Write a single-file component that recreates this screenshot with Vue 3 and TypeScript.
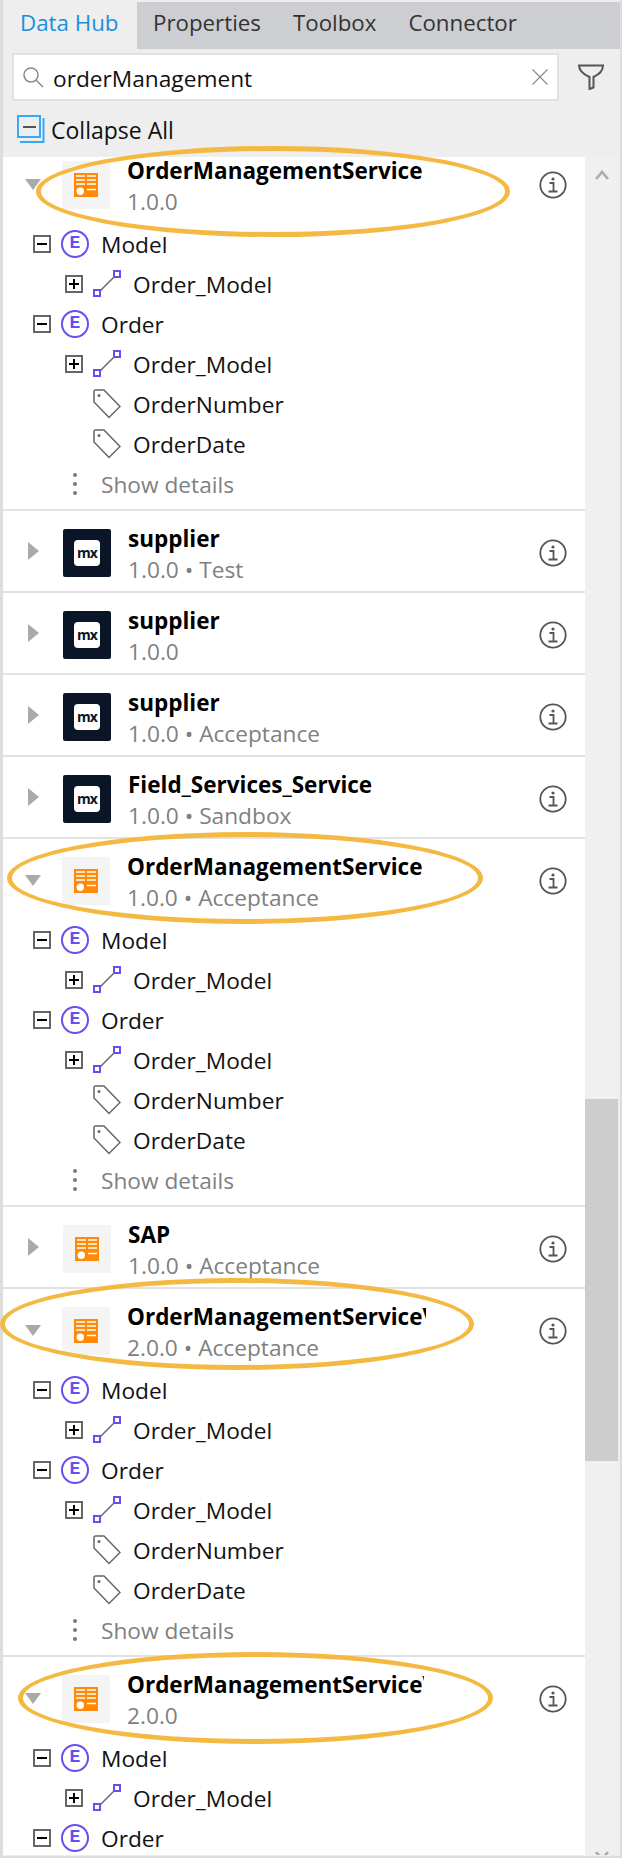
<script setup lang="ts">
interface Section {
  name: string
  sub: string
  icon: 'orange' | 'mx'
  open?: boolean
  nameWidth?: number
}

const tabs = ['Data Hub', 'Properties', 'Toolbox', 'Connector']

const sections: Section[] = [
  { name: 'OrderManagementService', sub: '1.0.0', icon: 'orange', open: true },
  { name: 'supplier', sub: '1.0.0 • Test', icon: 'mx' },
  { name: 'supplier', sub: '1.0.0', icon: 'mx' },
  { name: 'supplier', sub: '1.0.0 • Acceptance', icon: 'mx' },
  { name: 'Field_Services_Service', sub: '1.0.0 • Sandbox', icon: 'mx' },
  { name: 'OrderManagementService', sub: '1.0.0 • Acceptance', icon: 'orange', open: true },
  { name: 'SAP', sub: '1.0.0 • Acceptance', icon: 'orange' },
  { name: 'OrderManagementServiceV2', sub: '2.0.0 • Acceptance', icon: 'orange', open: true, nameWidth: 299 },
  { name: 'OrderManagementServiceV2', sub: '2.0.0', icon: 'orange', open: true, nameWidth: 297 },
]

const tree = [
  { kind: 'entity', label: 'Model' },
  { kind: 'assoc', label: 'Order_Model' },
  { kind: 'entity', label: 'Order' },
  { kind: 'assoc', label: 'Order_Model' },
  { kind: 'attr', label: 'OrderNumber' },
  { kind: 'attr', label: 'OrderDate' },
]

const highlights = [
  { x: 36, y: 146, w: 464, h: 81 },
  { x: 7, y: 832, w: 466, h: 82 },
  { x: 0, y: 1278, w: 464, h: 82 },
  { x: 18, y: 1652, w: 465, h: 82 },
]
</script>

<template>
  <div class="panel">
    <div class="tabs">
      <div v-for="(t, i) in tabs" :key="t" class="tab" :class="{ active: i === 0 }">{{ t }}</div>
    </div>

    <div class="search-row">
      <div class="search">
        <svg class="search-icon" width="22" height="22" viewBox="0 0 22 22" fill="none" stroke="#8a8a8a" stroke-width="1.5">
          <circle cx="9" cy="9" r="7" />
          <path d="M14 14l7 7" />
        </svg>
        <span class="search-text">orderManagement</span>
        <svg class="clear-icon" width="16" height="16" viewBox="0 0 16 16" stroke="#8a8a8a" stroke-width="1.2">
          <path d="M0.5 0.5l15 15M15.5 0.5l-15 15" />
        </svg>
      </div>
      <svg class="filter-icon" width="26" height="26" viewBox="0 0 26 26" fill="none" stroke="#555" stroke-width="2">
        <path d="M1 1.500h24c0 5-4 9-9.500 11.500v10.500l-4 1.500v-12C6 10.500 1 6.500 1 1.500z" />
      </svg>
    </div>

    <div class="collapse">
      <svg width="28" height="29" viewBox="0 0 28 29" fill="none">
        <rect x="1" y="1" width="22" height="21" stroke="#3aa8f8" stroke-width="2" />
        <path d="M3 27h23.500V3" stroke="#3aa8f8" stroke-width="2" />
        <path d="M6 12h13" stroke="#555" stroke-width="2" />
      </svg>
      <span class="collapse-label">Collapse All</span>
    </div>

    <div class="body">
      <div class="list">
        <div class="list-inner">
          <div v-for="(s, i) in sections" :key="i" class="section" :class="{ open: s.open }">
            <div class="header">
              <span class="arrow" :class="s.open ? 'down' : 'right'"></span>
              <div class="logo" :class="s.icon">
                <span v-if="s.icon === 'mx'" class="mx-badge">mx</span>
                <svg v-else width="24" height="24" viewBox="0 0 24 24">
                  <rect width="24" height="24" fill="#ff8a0a" />
                  <path d="M2 3h9M13 3h9M2 7h9M13 7h9M2 11h9M13 11h9M13 16.500h9" stroke="#fff" stroke-width="1.500" />
                  <circle cx="6.300" cy="18.300" r="3.700" fill="#fff" />
                </svg>
              </div>
              <div class="titles">
                <div class="name" :style="s.nameWidth ? { width: s.nameWidth + 'px' } : undefined">{{ s.name }}</div>
                <div class="sub">{{ s.sub }}</div>
              </div>
              <svg class="info" width="28" height="28" viewBox="0 0 28 28" fill="none" stroke="#555" stroke-width="1.800">
                <circle cx="14" cy="14" r="12.700" />
                <circle cx="14" cy="8" r="1.600" fill="#555" stroke="none" />
                <path d="M10.500 12h4v8.500M9.500 20.500h9" />
              </svg>
            </div>

            <div v-if="s.open" class="tree">
              <div v-for="(n, j) in tree" :key="j" class="node" :class="n.kind">
                <span v-if="n.kind !== 'attr'" class="box" :class="n.kind === 'entity' ? 'minus' : 'plus'"></span>
                <span v-if="n.kind === 'entity'" class="entity-icon">E</span>
                <svg v-else-if="n.kind === 'assoc'" class="node-icon" width="28" height="28" viewBox="0 0 28 28" fill="none">
                  <path d="M5 23L23 5" stroke="#666" stroke-width="1.500" />
                  <rect x="1" y="20" width="6" height="6" fill="#fff" stroke="#6450f0" stroke-width="2" />
                  <rect x="21" y="1" width="6" height="6" fill="#fff" stroke="#6450f0" stroke-width="2" />
                </svg>
                <svg v-else class="node-icon" width="28" height="30" viewBox="0 0 28 30" fill="none" stroke="#666" stroke-width="1.500">
                  <path d="M1 2.500c0-1 .5-1.500 1.500-1.500H11L27 17.500 16 28.500 1 13z" />
                  <circle cx="6" cy="6.500" r="1.500" fill="#666" stroke="none" />
                </svg>
                <span>{{ n.label }}</span>
              </div>
              <div class="node details">
                <span class="dots"><i></i><i></i><i></i></span>
                <span>Show details</span>
              </div>
            </div>
          </div>
        </div>

        <div
          v-for="(h, i) in highlights"
          :key="'h' + i"
          class="ring"
          :style="{ left: h.x + 'px', top: h.y + 'px', width: h.w + 'px', height: h.h + 'px' }"
        ></div>
      </div>

      <div class="scrollbar">
        <svg class="chev up" width="14" height="11" viewBox="0 0 14 11" fill="none" stroke="#aaa" stroke-width="2.500"><path d="M1 10l6-7 6 7" /></svg>
        <div class="thumb"></div>
        <svg class="chev down" width="14" height="11" viewBox="0 0 14 11" fill="none" stroke="#aaa" stroke-width="2.500"><path d="M1 1l6 7 6-7" /></svg>
      </div>
    </div>
  </div>
</template>

<style scoped>
.panel {
  position: relative;
  width: 622px;
  height: 1858px;
  box-sizing: border-box;
  padding: 2px 2px 2px 3px;
  background: #eee;
  font-family: 'Open Sans', 'Noto Sans', sans-serif;
  font-size: 22.7px;
  color: #111;
  box-shadow: inset 3px 0 0 #ddd, inset -2px 0 0 #ddd, inset 0 -2px 0 #ddd;
  overflow: hidden;
}

.tabs {
  display: flex;
  height: 47px;
  background: #cdced2;
}

.tab {
  padding: 0 16px;
  font-size: 22.300px;
  line-height: 41px;
  color: #333;
}

.tab.active {
  width: 134px;
  box-sizing: border-box;
  padding: 0 0 0 17px;
  background: #eee;
  color: #1a8fe0;
}

.search-row {
  display: flex;
  align-items: center;
  height: 48px;
  margin-top: 4px;
  padding-left: 9px;
}

.search {
  display: flex;
  align-items: center;
  width: 547px;
  height: 48px;
  box-sizing: border-box;
  background: #fff;
  border: 2px solid #e2e2e2;
}

.search-icon {
  margin-left: 8px;
}

.search-text {
  margin-left: 9px;
  flex: 1;
  line-height: 48px;
  padding-top: 3px;
}

.clear-icon {
  margin-right: 9px;
}

.filter-icon {
  margin-left: 19px;
}

.collapse {
  display: flex;
  align-items: center;
  gap: 6px;
  height: 56px;
  padding-left: 14px;
  font-size: 23px;
}

.collapse-label {
  padding-top: 2px;
}

.body {
  position: absolute;
  left: 3px;
  top: 157px;
  right: 2px;
  bottom: 3px;
  display: flex;
}

.list {
  position: relative;
  width: 582px;
  background: #fff;
}

.list-inner {
  height: 100%;
  overflow: hidden;
}

.section {
  border-bottom: 2px solid #e2e2e2;
  background: #fff;
}

.section:first-child {
  margin-top: -14px;
}

.header {
  display: flex;
  height: 80px;
  box-sizing: border-box;
  padding-top: 18px;
}

.arrow {
  width: 0;
  height: 0;
  flex: none;
  box-sizing: border-box;
}

.arrow.right {
  margin: 13px 24px 0 25px;
  border-style: solid;
  border-width: 9px 0 9px 11px;
  border-color: transparent transparent transparent #aaa;
}

.arrow.down {
  margin: 18px 21px 0 22px;
  border-style: solid;
  border-width: 11px 8.500px 0 8.500px;
  border-color: #aaa transparent transparent transparent;
}

.logo {
  width: 48px;
  height: 48px;
  flex: none;
  display: flex;
  align-items: center;
  justify-content: center;
  border-radius: 2px;
}

.logo.orange {
  background: #f4f4f4;
}

.logo.mx {
  background: #0b1528;
}

.mx-badge {
  width: 26px;
  height: 26px;
  background: #fff;
  border-radius: 4px;
  color: #0b1528;
  font-size: 14px;
  font-weight: 700;
  letter-spacing: -1px;
  line-height: 25px;
  text-align: center;
}

.titles {
  flex: 1;
  margin-left: 17px;
  min-width: 0;
}

.name {
  height: 32px;
  margin-top: -6px;
  overflow: hidden;
  white-space: nowrap;
  font-size: 22.500px;
  font-weight: 700;
  line-height: 32px;
  color: #000;
}

.sub {
  margin-top: -1px;
  line-height: 32px;
  color: #808080;
}

.info {
  margin: -4px 18px 0 0;
  flex: none;
  align-self: flex-start;
  position: relative;
  top: 14px;
}

.tree {
  padding: 1px 0 5px;
}

.node {
  display: flex;
  align-items: center;
  height: 40px;
}

.box {
  position: relative;
  width: 18px;
  height: 18px;
  flex: none;
  box-sizing: border-box;
  border: 2px solid #666;
  background: #fff;
}

.box::before,
.box.plus::after {
  content: '';
  position: absolute;
  background: #000;
}

.box::before {
  left: 2px;
  top: 6px;
  width: 10px;
  height: 2px;
}

.box.plus::after {
  left: 6px;
  top: 2px;
  width: 2px;
  height: 10px;
}

.node.entity {
  padding-left: 30px;
}

.node.entity .box {
  margin-right: 10px;
}

.entity-icon {
  width: 28px;
  height: 28px;
  box-sizing: border-box;
  flex: none;
  margin-right: 12px;
  border: 2px solid #6450f0;
  border-radius: 50%;
  color: #6450f0;
  font-family: 'Liberation Mono', monospace;
  font-size: 18px;
  font-weight: 700;
  line-height: 23px;
  text-align: center;
}

.node.assoc {
  padding-left: 62px;
}

.node.assoc .box {
  margin-right: 10px;
}

.node.attr {
  padding-left: 90px;
}

.node-icon {
  flex: none;
  margin-right: 12px;
}

.node.details {
  padding-left: 70px;
  color: #808080;
}

.dots {
  display: flex;
  flex-direction: column;
  gap: 5px;
  width: 28px;
  flex: none;
}

.dots i {
  width: 4px;
  height: 4px;
  border-radius: 50%;
  background: #777;
}

.ring {
  position: absolute;
  margin-top: -157px;
  margin-left: -3px;
  box-sizing: content-box;
  border: 5px solid #f4b942;
  border-radius: 50%;
  pointer-events: none;
}

.scrollbar {
  position: relative;
  width: 33px;
  background: #f0f0f0;
  overflow: hidden;
}

.thumb {
  position: absolute;
  left: 0;
  right: 0;
  top: 942px;
  height: 362px;
  background: #cdcdcd;
}

.chev {
  position: absolute;
  left: 10px;
}

.chev.up {
  top: 12px;
}

.chev.down {
  bottom: -7px;
}
</style>

<style>
html,
body {
  margin: 0;
  background: #fff;
}
</style>
